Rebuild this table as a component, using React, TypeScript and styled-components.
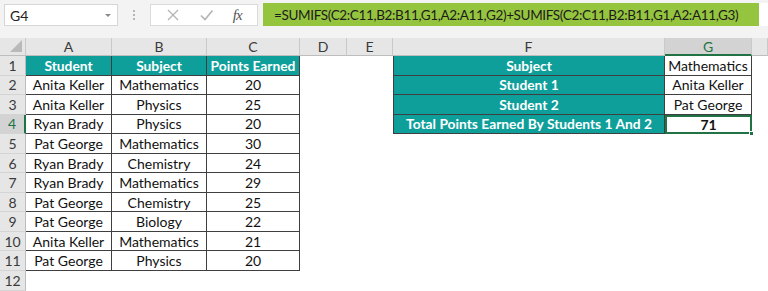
import * as React from 'react'
import styled, { createGlobalStyle, css } from 'styled-components'

const GlobalStyle = createGlobalStyle`
  * { box-sizing: border-box; }
  html, body { margin: 0; padding: 0; background: #ffffff; }
  body { font-family: Lato, "Liberation Sans", sans-serif; overflow: hidden; }
`

const colors = {
  teal: '#0f9f9b',
  line: '#3f3f3f',
  chrome: '#f3f3f3',
  header: '#e6e6e6',
  headerLine: '#c9c9c9',
  excel: '#217346',
  formula: '#95c43f',
}

const Screen = styled.div`
  width: 768px;
  height: 291px;
  overflow: hidden;
  background: #ffffff;
`

const Toolbar = styled.div`
  height: 38px;
  background: ${colors.chrome};
  display: flex;
  align-items: flex-start;
  padding: 4px 0 0 4px;
`

const NameBox = styled.div`
  flex: none;
  width: 114px;
  height: 22px;
  background: #ffffff;
  border: 1px solid #d6d6d6;
  display: flex;
  align-items: center;
  justify-content: space-between;
  padding: 0 6px 0 5px;
  font-size: 14px;
  color: #222;
`

const Caret = styled.span`
  width: 0;
  height: 0;
  border-left: 3px solid transparent;
  border-right: 3px solid transparent;
  border-top: 3px solid #8a8a8a;
`

const Grip = styled.div`
  flex: none;
  width: 32px;
  height: 22px;
  display: flex;
  flex-direction: column;
  align-items: center;
  justify-content: center;
  gap: 2px;

  span {
    width: 2px;
    height: 2px;
    background: #b5b5b5;
  }
`

const IconBox = styled.div`
  flex: none;
  width: 108px;
  height: 22px;
  background: #ffffff;
  border: 1px solid #dadada;
  display: flex;
  align-items: center;
  justify-content: space-around;
  padding: 0 6px;
`

const Fx = styled.span`
  font-family: "Liberation Serif", serif;
  font-style: italic;
  font-size: 15px;
  color: #555;
  letter-spacing: -1px;
`

const FormulaField = styled.div`
  flex: 1;
  min-width: 0;
  margin-left: 5px;
  margin-top: -1px;
  height: 23px;
  background: #ffffff;
  display: flex;
`

const FormulaText = styled.div`
  flex: none;
  width: 496px;
  height: 100%;
  background: ${colors.formula};
  display: flex;
  align-items: center;
  padding-left: 11px;
  font-size: 13.5px;
  letter-spacing: -0.35px;
  color: #1c1c1c;
  white-space: nowrap;
  overflow: hidden;
`

const Sheet = styled.div`
  display: grid;
  grid-template-columns: 26px 86px 95px 93px 47px 46px 272px 87px 1fr;
  grid-template-rows: 18px repeat(11, 19.55px) 1fr;
  height: 253px;
`

const ColHead = styled.div<{ $active?: boolean }>`
  background: ${(p) => (p.$active ? '#d3d3d3' : colors.header)};
  color: ${(p) => (p.$active ? colors.excel : '#3a3a3a')};
  border-right: 1px solid ${colors.headerLine};
  border-bottom: ${(p) => (p.$active ? `2px solid ${colors.excel}` : `1px solid #bdbdbd`)};
  font-size: 14px;
  display: flex;
  align-items: center;
  justify-content: center;
`

const Corner = styled.div`
  background: ${colors.header};
  border-right: 1px solid ${colors.headerLine};
  border-bottom: 1px solid #bdbdbd;
  position: relative;

  &::after {
    content: '';
    position: absolute;
    right: 3px;
    bottom: 3px;
    border-left: 12px solid transparent;
    border-bottom: 12px solid #b9b9b9;
  }
`

const RowHead = styled.div<{ $active?: boolean }>`
  background: ${(p) => (p.$active ? '#d3d3d3' : colors.header)};
  color: ${(p) => (p.$active ? colors.excel : '#3a3a3a')};
  border-right: ${(p) => (p.$active ? `2px solid ${colors.excel}` : `1px solid #bdbdbd`)};
  border-bottom: 1px solid #d4d4d4;
  font-size: 14px;
  display: flex;
  align-items: center;
  justify-content: center;
`

type Kind = 'blank' | 'head' | 'data' | 'active'

const Cell = styled.div<{ $kind: Kind; $left?: boolean }>`
  display: flex;
  align-items: center;
  justify-content: center;
  white-space: nowrap;
  font-size: 14px;
  color: #111;
  position: relative;

  ${(p) =>
    p.$kind !== 'blank' &&
    css`
      border-right: 1px solid ${colors.line};
      border-bottom: 1px solid ${colors.line};
    `}
  ${(p) => p.$left && css`border-left: 1px solid ${colors.line};`}
  ${(p) =>
    p.$kind === 'head' &&
    css`
      background: ${colors.teal};
      color: #ffffff;
      font-weight: 700;
      font-size: 13.8px;
    `}
  ${(p) =>
    p.$kind === 'active' &&
    css`
      border: 2px solid ${colors.excel};
      font-weight: 700;
    `}
`

const Handle = styled.span`
  position: absolute;
  right: -4px;
  bottom: -4px;
  width: 5px;
  height: 5px;
  background: ${colors.excel};
  border: 1px solid #ffffff;
`

const cols = ['A', 'B', 'C', 'D', 'E', 'F', 'G']

const data: [string, string, string][] = [
  ['Anita Keller', 'Mathematics', '20'],
  ['Anita Keller', 'Physics', '25'],
  ['Ryan Brady', 'Physics', '20'],
  ['Pat George', 'Mathematics', '30'],
  ['Ryan Brady', 'Chemistry', '24'],
  ['Ryan Brady', 'Mathematics', '29'],
  ['Pat George', 'Chemistry', '25'],
  ['Pat George', 'Biology', '22'],
  ['Anita Keller', 'Mathematics', '21'],
  ['Pat George', 'Physics', '20'],
]

const lookup: [string, string][] = [
  ['Subject', 'Mathematics'],
  ['Student 1', 'Anita Keller'],
  ['Student 2', 'Pat George'],
  ['Total Points Earned By Students 1 And 2', '71'],
]

const XIcon = () => (
  <svg width="14" height="14" viewBox="0 0 14 14">
    <path d="M2 2 L12 12 M12 2 L2 12" stroke="#b4b4b4" strokeWidth="1.3" fill="none" />
  </svg>
)

const CheckIcon = () => (
  <svg width="15" height="14" viewBox="0 0 15 14">
    <path d="M2 7.5 L6 11.5 L13.5 2.5" stroke="#b4b4b4" strokeWidth="1.6" fill="none" />
  </svg>
)

const App: React.FC = () => {
  const rows: React.ReactNode[] = []

  for (let r = 1; r <= 12; r++) {
    rows.push(
      <RowHead key={`h${r}`} $active={r === 4}>
        {r}
      </RowHead>,
    )
    const rec = r >= 2 && r <= 11 ? data[r - 2] : null
    if (r === 1) {
      rows.push(
        <Cell key="a1" $kind="head">Student</Cell>,
        <Cell key="b1" $kind="head">Subject</Cell>,
        <Cell key="c1" $kind="head">Points Earned</Cell>,
      )
    } else if (rec) {
      rows.push(
        <Cell key={`a${r}`} $kind="data">{rec[0]}</Cell>,
        <Cell key={`b${r}`} $kind="data">{rec[1]}</Cell>,
        <Cell key={`c${r}`} $kind="data">{rec[2]}</Cell>,
      )
    } else {
      rows.push(
        <Cell key={`a${r}`} $kind="blank" />,
        <Cell key={`b${r}`} $kind="blank" />,
        <Cell key={`c${r}`} $kind="blank" />,
      )
    }
    rows.push(<Cell key={`d${r}`} $kind="blank" />, <Cell key={`e${r}`} $kind="blank" />)
    const look = r <= 4 ? lookup[r - 1] : null
    if (look) {
      rows.push(
        <Cell key={`f${r}`} $kind="head" $left>
          {look[0]}
        </Cell>,
        r === 4 ? (
          <Cell key={`g${r}`} $kind="active">
            {look[1]}
            <Handle />
          </Cell>
        ) : (
          <Cell key={`g${r}`} $kind="data">{look[1]}</Cell>
        ),
      )
    } else {
      rows.push(<Cell key={`f${r}`} $kind="blank" />, <Cell key={`g${r}`} $kind="blank" />)
    }
    rows.push(<Cell key={`x${r}`} $kind="blank" />)
  }

  return (
    <Screen>
      <GlobalStyle />
      <Toolbar>
        <NameBox>
          G4
          <Caret />
        </NameBox>
        <Grip>
          <span />
          <span />
          <span />
        </Grip>
        <IconBox>
          <XIcon />
          <CheckIcon />
          <Fx>fx</Fx>
        </IconBox>
        <FormulaField>
          <FormulaText>
            =SUMIFS(C2:C11,B2:B11,G1,A2:A11,G2)+SUMIFS(C2:C11,B2:B11,G1,A2:A11,G3)
          </FormulaText>
        </FormulaField>
      </Toolbar>
      <Sheet>
        <Corner />
        {cols.map((c) => (
          <ColHead key={c} $active={c === 'G'}>
            {c}
          </ColHead>
        ))}
        <ColHead />
        {rows}
      </Sheet>
    </Screen>
  )
}

export default App
